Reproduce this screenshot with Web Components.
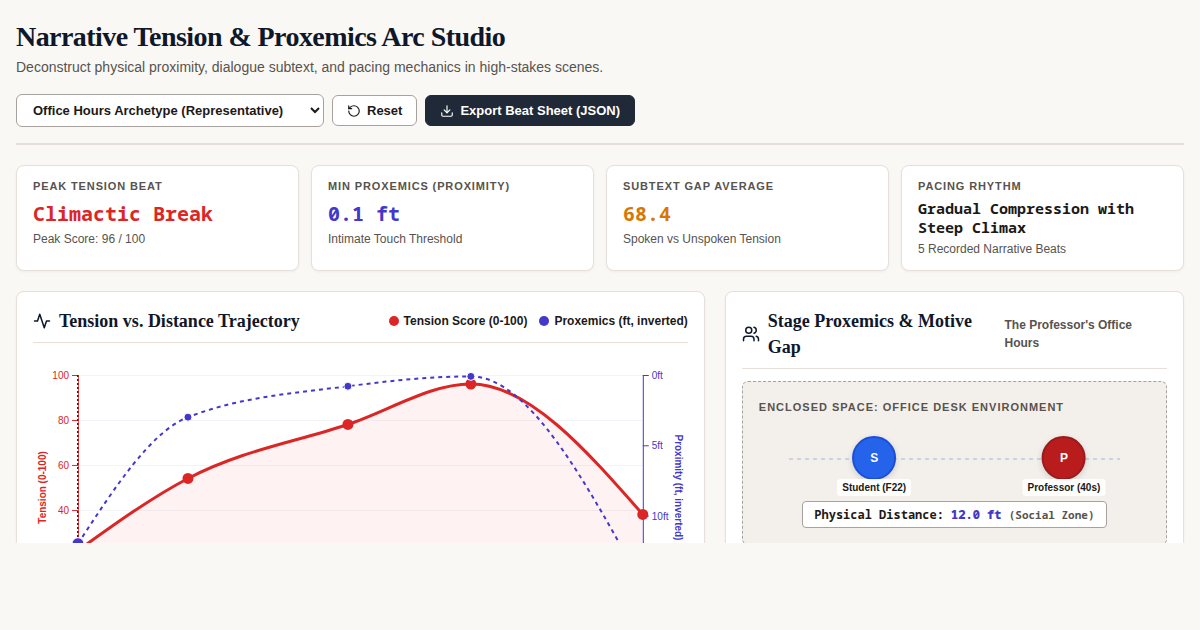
<!DOCTYPE html>
<html lang="en">
<head>
<meta charset="utf-8">
<meta name="viewport" content="width=device-width, initial-scale=1">
<title>Narrative Tension &amp; Proxemics Arc Studio</title>
<style>
  :root {
    --bg: #faf8f5;
    --card: #ffffff;
    --line: #e7e0da;
    --edge: #a8a29e;
    --ink: #1c1917;
    --muted: #57534e;
    --navy: #0f172a;
    --red: #dc2626;
    --indigo: #4338ca;
    --amber: #d97706;
    --sans: "Liberation Sans", Arial, sans-serif;
    --serif: "Liberation Serif", Georgia, serif;
    --mono: "Noto Sans Mono", monospace;
  }
  body {
    margin: 0;
    background: var(--bg);
    color: var(--ink);
    font-family: var(--sans);
  }
</style>
</head>
<body>
<arc-studio>
  <studio-header slot="header" heading="Narrative Tension &amp; Proxemics Arc Studio">
    Deconstruct physical proximity, dialogue subtext, and pacing mechanics in high-stakes scenes.
    <scene-select slot="controls"></scene-select>
    <studio-button slot="controls" icon="reset">Reset</studio-button>
    <studio-button slot="controls" icon="download" primary>Export Beat Sheet (JSON)</studio-button>
  </studio-header>

  <metric-card slot="metrics" label="Peak Tension Beat" value="Climactic Break" tone="red">Peak Score: 96 / 100</metric-card>
  <metric-card slot="metrics" label="Min Proxemics (Proximity)" value="0.1 ft" tone="indigo">Intimate Touch Threshold</metric-card>
  <metric-card slot="metrics" label="Subtext Gap Average" value="68.4" tone="amber">Spoken vs Unspoken Tension</metric-card>
  <metric-card slot="metrics" label="Pacing Rhythm" value="Gradual Compression with Steep Climax" long>5 Recorded Narrative Beats</metric-card>

  <studio-panel slot="panels" icon="activity" heading="Tension vs. Distance Trajectory">
    <chart-legend slot="aside"></chart-legend>
    <tension-chart></tension-chart>
  </studio-panel>
  <studio-panel slot="panels" icon="users" heading="Stage Proxemics &amp; Motive Gap">
    <span slot="aside">The Professor's Office Hours</span>
    <proxemics-stage></proxemics-stage>
  </studio-panel>
</arc-studio>

<script>
const icons = {
  reset: '<path d="M3 12a9 9 0 1 0 9-9 9.75 9.75 0 0 0-6.74 2.74L3 8"/><path d="M3 3v5h5"/>',
  download: '<path d="M21 15v4a2 2 0 0 1-2 2H5a2 2 0 0 1-2-2v-4"/><path d="m7 10 5 5 5-5"/><path d="M12 15V3"/>',
  activity: '<path d="M22 12h-4l-3 9L9 3l-3 9H2"/>',
  users: '<path d="M16 21v-2a4 4 0 0 0-4-4H6a4 4 0 0 0-4 4v2"/><circle cx="9" cy="7" r="4"/><path d="M22 21v-2a4 4 0 0 0-3-3.87"/><path d="M16 3.13a4 4 0 0 1 0 7.75"/>'
};

function icon(name, size) {
  return `<svg width="${size}" height="${size}" viewBox="0 0 24 24" fill="none" stroke="currentColor" stroke-width="2" stroke-linecap="round" stroke-linejoin="round" aria-hidden="true">${icons[name]}</svg>`;
}

const beats = [
  { x: 0, tension: 22, feet: 12 },
  { x: 110, tension: 54, feet: 3 },
  { x: 270, tension: 78, feet: 0.8 },
  { x: 393, tension: 96, feet: 0.1 },
  { x: 565, tension: 38, feet: 15 }
];

class ArcStudio extends HTMLElement {
  constructor() {
    super();
    this.attachShadow({ mode: 'open' });
    this.shadowRoot.innerHTML = `
      <style>
        /* the workspace keeps a free strip at the foot of the window */
        :host {
          display: block;
          box-sizing: border-box;
          height: calc(100vh - 87px);
          padding: 16px 16px 0;
          overflow: hidden;
        }
        .metrics {
          display: grid;
          grid-template-columns: repeat(4, 1fr);
          gap: 12px;
          margin: 20px 0;
        }
        .panels {
          display: grid;
          grid-template-columns: 3fr 2fr;
          gap: 20px;
        }
        @media (max-width: 800px) {
          .metrics { grid-template-columns: repeat(2, 1fr); }
          .panels { grid-template-columns: 1fr; }
          :host { height: auto; }
        }
      </style>
      <slot name="header"></slot>
      <section class="metrics"><slot name="metrics"></slot></section>
      <main class="panels"><slot name="panels"></slot></main>`;
  }
}
customElements.define('arc-studio', ArcStudio);

class StudioHeader extends HTMLElement {
  constructor() {
    super();
    this.attachShadow({ mode: 'open' });
    this.shadowRoot.innerHTML = `
      <style>
        :host {
          display: block;
          padding-bottom: 16px;
          border-bottom: 2px solid var(--line);
        }
        h1 {
          margin: 0;
          font: bold 28px/42px var(--serif);
          letter-spacing: -0.02em;
          color: var(--navy);
        }
        p {
          margin: 0 0 18px;
          font-size: 14px;
          line-height: 18px;
          color: var(--muted);
        }
        .controls {
          display: flex;
          flex-wrap: wrap;
          align-items: center;
          gap: 8px;
        }
      </style>
      <h1></h1>
      <p><slot></slot></p>
      <div class="controls"><slot name="controls"></slot></div>`;
    this.shadowRoot.querySelector('h1').textContent = this.getAttribute('heading');
  }
}
customElements.define('studio-header', StudioHeader);

class SceneSelect extends HTMLElement {
  constructor() {
    super();
    this.attachShadow({ mode: 'open' });
    this.shadowRoot.innerHTML = `
      <style>
        :host { display: block; }
        select {
          display: block;
          min-width: 308px;
          padding: 7px 12px;
          border: 1px solid var(--edge);
          border-radius: 6px;
          background: var(--card);
          color: var(--ink);
          font: bold 13px var(--sans);
        }
      </style>
      <select aria-label="Scene archetype">
        <option>Office Hours Archetype (Representative)</option>
        <option>Custom Scene</option>
      </select>`;
  }
}
customElements.define('scene-select', SceneSelect);

class StudioButton extends HTMLElement {
  constructor() {
    super();
    this.attachShadow({ mode: 'open' });
    this.shadowRoot.innerHTML = `
      <style>
        :host { display: block; }
        button {
          display: flex;
          align-items: center;
          gap: 6px;
          padding: 7px 14px;
          border: 1px solid var(--edge);
          border-radius: 6px;
          background: var(--card);
          color: var(--ink);
          font: bold 13px var(--sans);
          cursor: pointer;
        }
        :host([primary]) button {
          background: #1f2937;
          border-color: #1f2937;
          color: #ffffff;
        }
      </style>
      <button type="button">${icon(this.getAttribute('icon'), 14)}<slot></slot></button>`;
  }
}
customElements.define('studio-button', StudioButton);

class MetricCard extends HTMLElement {
  constructor() {
    super();
    this.attachShadow({ mode: 'open' });
    this.shadowRoot.innerHTML = `
      <style>
        :host {
          display: block;
          padding: 12px 16px;
          border: 1px solid var(--line);
          border-radius: 8px;
          background: var(--card);
          box-shadow: 0 1px 3px rgba(0, 0, 0, .05);
        }
        .label {
          font-size: 11px;
          line-height: 17px;
          font-weight: bold;
          letter-spacing: 0.08em;
          text-transform: uppercase;
          color: var(--muted);
        }
        .value {
          margin: 5px 0 2px;
          font: bold 20px/28px var(--mono);
        }
        :host([long]) .value {
          margin: 4px 0 3px;
          font-size: 15px;
          line-height: 19px;
        }
        :host([tone="red"]) .value { color: var(--red); }
        :host([tone="indigo"]) .value { color: var(--indigo); }
        :host([tone="amber"]) .value { color: var(--amber); }
        .note {
          font-size: 12px;
          line-height: 18px;
          color: var(--muted);
        }
      </style>
      <div class="label"></div>
      <div class="value"></div>
      <div class="note"><slot></slot></div>`;
    this.shadowRoot.querySelector('.label').textContent = this.getAttribute('label');
    this.shadowRoot.querySelector('.value').textContent = this.getAttribute('value');
  }
}
customElements.define('metric-card', MetricCard);

class StudioPanel extends HTMLElement {
  constructor() {
    super();
    this.attachShadow({ mode: 'open' });
    this.shadowRoot.innerHTML = `
      <style>
        :host {
          display: block;
          min-width: 0;
          padding: 16px;
          border: 1px solid var(--line);
          border-radius: 8px;
          background: var(--card);
          box-shadow: 0 1px 3px rgba(0, 0, 0, .05);
        }
        header {
          display: flex;
          justify-content: space-between;
          align-items: center;
          margin-bottom: 12px;
          padding-bottom: 8px;
          border-bottom: 1px solid var(--line);
        }
        h2 {
          display: flex;
          align-items: center;
          gap: 8px;
          margin: 0;
          font: bold 18px/26px var(--serif);
          color: var(--navy);
        }
        svg { flex: none; }
        .aside {
          font-size: 12px;
          line-height: 18px;
          font-weight: bold;
          color: var(--muted);
        }
      </style>
      <header>
        <h2>${icon(this.getAttribute('icon'), 18)}<span></span></h2>
        <div class="aside"><slot name="aside"></slot></div>
      </header>
      <slot></slot>`;
    this.shadowRoot.querySelector('h2 span').textContent = this.getAttribute('heading');
  }
}
customElements.define('studio-panel', StudioPanel);

class ChartLegend extends HTMLElement {
  constructor() {
    super();
    this.attachShadow({ mode: 'open' });
    this.shadowRoot.innerHTML = `
      <style>
        :host {
          display: flex;
          gap: 12px;
          color: var(--ink);
        }
        span {
          display: flex;
          align-items: center;
          gap: 5px;
        }
        span::before {
          content: "";
          width: 10px;
          height: 10px;
          border-radius: 50%;
          background: var(--red);
        }
        .prox::before { background: var(--indigo); }
      </style>
      <span>Tension Score (0-100)</span>
      <span class="prox">Proxemics (ft, inverted)</span>`;
  }
}
customElements.define('chart-legend', ChartLegend);

// cubic path through the points that never overshoots between them
function monotonePath(pts) {
  const n = pts.length;
  const h = [], s = [], m = [];
  for (let i = 0; i < n - 1; i++) {
    h[i] = pts[i + 1][0] - pts[i][0];
    s[i] = (pts[i + 1][1] - pts[i][1]) / h[i];
  }
  for (let i = 1; i < n - 1; i++) {
    const p = (s[i - 1] * h[i] + s[i] * h[i - 1]) / (h[i - 1] + h[i]);
    m[i] = (Math.sign(s[i - 1]) + Math.sign(s[i])) *
      Math.min(Math.abs(s[i - 1]), Math.abs(s[i]), 0.5 * Math.abs(p));
  }
  m[0] = (3 * s[0] - m[1]) / 2;
  m[n - 1] = (3 * s[n - 2] - m[n - 2]) / 2;
  let d = `M${pts[0]}`;
  for (let i = 0; i < n - 1; i++) {
    const k = h[i] / 3;
    const [x0, y0] = pts[i];
    const [x1, y1] = pts[i + 1];
    d += `C${x0 + k},${y0 + k * m[i]},${x1 - k},${y1 - k * m[i + 1]},${x1},${y1}`;
  }
  return d;
}

class TensionChart extends HTMLElement {
  constructor() {
    super();
    this.attachShadow({ mode: 'open' });
    this.render();
  }

  render() {
    const w = 565, h = 225;
    const yT = v => h - v / 100 * h;
    const yP = v => v / 16 * h;
    const tension = beats.map(b => [b.x, yT(b.tension)]);
    const feet = beats.map(b => [b.x, yP(b.feet)]);
    const line = monotonePath(tension);

    const left = [40, 60, 80, 100].map(v => `
      <line class="grid" x2="${w}" y1="${yT(v) + .5}" y2="${yT(v) + .5}"/>
      <line class="red" x1="-6" x2="0" y1="${yT(v) + .5}" y2="${yT(v) + .5}"/>
      <text class="t" x="-9" y="${yT(v)}" dy="4" text-anchor="end">${v}</text>`).join('');
    const right = [0, 5, 10].map(v => `
      <line class="blue" x1="${w}" x2="${w + 6}" y1="${yP(v) + .5}" y2="${yP(v) + .5}"/>
      <text class="p" x="${w + 9}" y="${yP(v)}" dy="4">${v}ft</text>`).join('');

    this.shadowRoot.innerHTML = `
      <style>
        :host { display: block; }
        svg { display: block; width: 100%; height: auto; }
        text { font: 10px var(--sans); }
        .axis { font-weight: bold; }
        .t { fill: var(--red); }
        .p { fill: var(--indigo); }
        .grid { stroke: #f1f5f9; }
        .red { stroke: var(--red); }
        .blue { stroke: var(--indigo); }
        .area { fill: #ef4444; opacity: .07; }
        .tension { fill: none; stroke: var(--red); stroke-width: 3; }
        .feet { fill: none; stroke: var(--indigo); stroke-width: 2; stroke-dasharray: 4 4; }
        .marker { stroke: #1f2937; stroke-width: 2; stroke-dasharray: 2 2; }
        .dot-t { fill: var(--red); }
        .dot-p { fill: var(--indigo); stroke: #ffffff; }
      </style>
      <svg viewBox="0 0 655 280" role="img" aria-label="Tension and distance across the beats">
        <g transform="translate(45 20)">
          ${left}
          ${right}
          <path class="area" d="${line}V${h}H0Z"/>
          <line class="marker" x1="0" x2="0" y1="0" y2="${h}"/>
          <line class="red" x1=".5" x2=".5" y1="0" y2="${h}" opacity=".8"/>
          <line class="blue" x1="${w + .5}" x2="${w + .5}" y1="0" y2="${h}"/>
          <text class="t axis" transform="rotate(-90)" x="${-h / 2}" y="-32" text-anchor="middle">Tension (0-100)</text>
          <text class="p axis" transform="translate(${w + 32} ${h / 2}) rotate(90)" text-anchor="middle">Proximity (ft, inverted)</text>
          <path class="tension" d="${line}"/>
          <path class="feet" d="${monotonePath(feet)}"/>
          ${tension.map(p => `<circle class="dot-t" cx="${p[0]}" cy="${p[1]}" r="5.5"/>`).join('')}
          ${feet.map((p, i) => `<circle class="dot-p" cx="${p[0]}" cy="${p[1]}" r="${i ? 4 : 6}"/>`).join('')}
        </g>
      </svg>`;
  }
}
customElements.define('tension-chart', TensionChart);

class StageActor extends HTMLElement {
  constructor() {
    super();
    this.attachShadow({ mode: 'open' });
    this.shadowRoot.innerHTML = `
      <style>
        :host {
          display: flex;
          flex-direction: column;
          align-items: center;
          white-space: nowrap;
        }
        .disc {
          display: flex;
          align-items: center;
          justify-content: center;
          box-sizing: border-box;
          width: 44px;
          height: 44px;
          border: 2px solid #1d4ed8;
          border-radius: 50%;
          background: #2563eb;
          color: #ffffff;
          font-size: 12px;
          font-weight: bold;
          box-shadow: 0 2px 6px rgba(0, 0, 0, .15);
        }
        :host([tone="red"]) .disc {
          background: #b91c1c;
          border-color: #991b1b;
        }
        .name {
          position: relative;
          margin-top: -1px;
          padding: 0 5px;
          border-radius: 3px;
          background: rgba(255, 255, 255, .9);
          font-size: 10px;
          line-height: 17px;
          font-weight: bold;
        }
      </style>
      <div class="disc"></div>
      <div class="name"><slot></slot></div>`;
    this.shadowRoot.querySelector('.disc').textContent = this.getAttribute('initial');
  }
}
customElements.define('stage-actor', StageActor);

class ProxemicsStage extends HTMLElement {
  constructor() {
    super();
    this.attachShadow({ mode: 'open' });
    this.shadowRoot.innerHTML = `
      <style>
        :host {
          display: flex;
          flex-direction: column;
          padding: 16px;
          border: 1px dashed var(--edge);
          border-radius: 6px;
          background: #f3efea;
        }
        .label {
          font-size: 11px;
          line-height: 18px;
          font-weight: bold;
          letter-spacing: 1px;
          text-transform: uppercase;
          color: var(--muted);
        }
        .floor {
          position: relative;
          height: 85px;
        }
        .track {
          position: absolute;
          left: 30px;
          right: 30px;
          top: 42px;
          height: 2px;
          background: repeating-linear-gradient(90deg, #cbd5e1 0 4px, transparent 4px 8px);
        }
        stage-actor {
          position: absolute;
          top: 20px;
          transform: translateX(-50%);
        }
        .readout {
          align-self: center;
          padding: 4px 11px;
          border: 1px solid var(--edge);
          border-radius: 4px;
          background: var(--card);
          font: bold 12px/17px var(--mono);
        }
        b { color: var(--indigo); }
        small { font-size: 11px; color: var(--muted); }
      </style>
      <div class="label">Enclosed Space: Office Desk Environment</div>
      <div class="floor">
        <div class="track"></div>
        <stage-actor initial="S" style="left: 29.5%">Student (F22)</stage-actor>
        <stage-actor initial="P" tone="red" style="left: 78%">Professor (40s)</stage-actor>
      </div>
      <div class="readout">Physical Distance: <b>12.0 ft</b> <small>(Social Zone)</small></div>`;
  }
}
customElements.define('proxemics-stage', ProxemicsStage);
</script>
</body>
</html>
